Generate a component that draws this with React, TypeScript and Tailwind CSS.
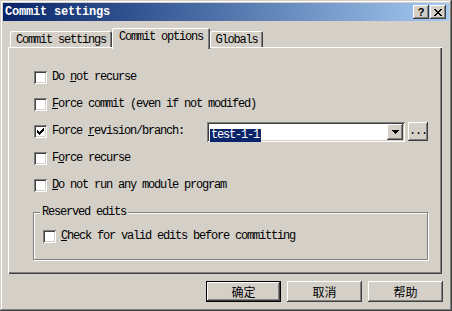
import type { ReactNode } from 'react'

const raised =
  'shadow-[inset_-1px_-1px_#404040,inset_1px_1px_#ffffff,inset_-2px_-2px_#808080,inset_2px_2px_#d4d0c8]'
const sunken =
  'shadow-[inset_1px_1px_#808080,inset_-1px_-1px_#ffffff,inset_2px_2px_#404040,inset_-2px_-2px_#d4d0c8]'
const mono = "font-['Liberation_Mono',monospace] text-[12px] leading-[13px] tracking-[-1.2px] text-black"

function CheckMark() {
  return (
    <svg width="7" height="7" viewBox="0 0 7 7" shapeRendering="crispEdges">
      <rect x="0" y="2" width="1" height="3" fill="#000" />
      <rect x="1" y="3" width="1" height="3" fill="#000" />
      <rect x="2" y="4" width="1" height="3" fill="#000" />
      <rect x="3" y="3" width="1" height="3" fill="#000" />
      <rect x="4" y="2" width="1" height="3" fill="#000" />
      <rect x="5" y="1" width="1" height="3" fill="#000" />
      <rect x="6" y="0" width="1" height="3" fill="#000" />
    </svg>
  )
}

function Checkbox({ checked = false }: { checked?: boolean }) {
  return (
    <span className={`flex h-[13px] w-[13px] shrink-0 items-center justify-center bg-white ${sunken}`}>
      {checked && <CheckMark />}
    </span>
  )
}

function Row({ checked, children }: { checked?: boolean; children: ReactNode }) {
  return (
    <div className="flex h-[13px] items-center gap-[5px]">
      <Checkbox checked={checked} />
      <span className={mono}>{children}</span>
    </div>
  )
}

function Tab({ label, active, width }: { label: string; active?: boolean; width: string }) {
  return (
    <div
      className={`${width} ${mono} flex justify-center bg-[#d4d0c8] rounded-t-[2px] shadow-[inset_1px_1px_#ffffff,inset_-1px_0_#404040,inset_-2px_0_#808080] ${
        active ? 'relative z-10 -mb-[2px] h-[21px] pt-[3px]' : 'h-[16px] pt-[3px]'
      }`}
    >
      {label}
    </div>
  )
}

function DialogButton({ label, isDefault }: { label: string; isDefault?: boolean }) {
  return (
    <button
      className={`flex h-[21px] w-[75px] items-center justify-center bg-[#d4d0c8] font-['Noto_Sans_CJK_SC',sans-serif] text-[12px] leading-none text-black ${
        isDefault ? 'border border-black' : ''
      } ${raised}`}
    >
      {label}
    </button>
  )
}

export default function App() {
  return (
    <div className="flex h-[311px] w-[452px] flex-col bg-[#d4d0c8] p-[3px] shadow-[inset_-1px_-1px_#404040,inset_1px_1px_#d4d0c8,inset_-2px_-2px_#808080,inset_2px_2px_#ffffff]">
      {/* title bar */}
      <div className="flex h-[18px] items-center justify-between bg-linear-to-r from-[#0a246a] to-[#a6caf0] pl-[2px] pr-[3px]">
        <span className="font-['Liberation_Mono',monospace] text-[12px] font-bold leading-none tracking-[-0.2px] text-white">
          Commit settings
        </span>
        <div className="flex gap-[1px]">
          <span
            className={`flex h-[14px] w-[16px] items-center justify-center bg-[#d4d0c8] font-['Liberation_Sans',sans-serif] text-[11px] font-bold leading-none text-black ${raised}`}
          >
            ?
          </span>
          <span className={`flex h-[14px] w-[16px] items-center justify-center bg-[#d4d0c8] ${raised}`}>
            <svg width="8" height="7" viewBox="0 0 8 7" shapeRendering="crispEdges">
              <path d="M0 0h2v1h1v1h2v-1h1v-1h2v1h-1v1h-1v1h-1v1h1v1h1v1h1v1h-2v-1h-1v-1h-2v1h-1v1h-2v-1h1v-1h1v-1h1v-1h-1v-1h-1v-1h-1z" fill="#000" />
            </svg>
          </span>
        </div>
      </div>

      {/* tabs + panel */}
      <div className="mt-[7px] pl-[5px]">
        <div className="ml-[2px] flex h-[19px] items-end">
          <Tab label="Commit settings" width="w-[102px]" />
          <Tab label="Commit options" width="w-[98px]" active />
          <Tab label="Globals" width="w-[53px]" />
        </div>
        <div className="flex h-[227px] w-[434px] flex-col pl-[26px] pt-[24px] shadow-[inset_1px_1px_#ffffff,inset_-1px_-1px_#404040,inset_-2px_-2px_#808080]">
          <div className="flex flex-col gap-[14px]">
            <Row>
              Do <span className="underline">n</span>ot recurse
            </Row>
            <Row>
              <span className="underline">F</span>orce commit (even if not modifed)
            </Row>
            <div className="flex h-[13px] items-center">
              <div className="flex w-[173px] items-center gap-[5px]">
                <Checkbox checked />
                <span className={mono}>
                  Force <span className="underline">r</span>evision/branch:
                </span>
              </div>
              <div className={`flex h-[20px] w-[198px] shrink-0 items-center bg-white p-[2px] ${sunken}`}>
                <div className="flex-1">
                  <span className={`${mono} ml-[1px] inline-block bg-[#0a246a] pl-[1px] pr-[2px] !text-white`}>test-1-1</span>
                </div>
                <span className={`flex h-[16px] w-[16px] items-center justify-center bg-[#d4d0c8] ${raised}`}>
                  <svg width="7" height="4" viewBox="0 0 7 4" shapeRendering="crispEdges">
                    <path d="M0 0h7v1h-1v1h-1v1h-1v1h-1v-1h-1v-1h-1v-1h-1z" fill="#000" />
                  </svg>
                </span>
              </div>
              <span
                className={`ml-[3px] flex h-[19px] w-[20px] items-end justify-center bg-[#d4d0c8] pb-[3px] ${mono} ${raised}`}
              >
                ...
              </span>
            </div>
            <Row>
              F<span className="underline">o</span>rce recurse
            </Row>
            <Row>
              <span className="underline">D</span>o not run any module program
            </Row>
          </div>

          <fieldset className="-ml-[1px] mt-[14px] w-[395px] border border-[#808080] pb-[16px] pl-[6px] shadow-[inset_1px_1px_#ffffff,1px_1px_#ffffff]">
            <legend className={`${mono} bg-[#d4d0c8] px-[2px]`}>Reserved edits</legend>
            <div className="ml-[3px] mt-[11px] flex h-[13px] items-center gap-[5px]">
              <Checkbox />
              <span className={mono}>
                <span className="underline">C</span>heck for valid edits before committing
              </span>
            </div>
          </fieldset>
        </div>
      </div>

      {/* buttons */}
      <div className="mt-[7px] flex justify-end gap-[6px] pr-[6px]">
        <DialogButton label="确定" isDefault />
        <DialogButton label="取消" />
        <DialogButton label="帮助" />
      </div>
    </div>
  )
}
